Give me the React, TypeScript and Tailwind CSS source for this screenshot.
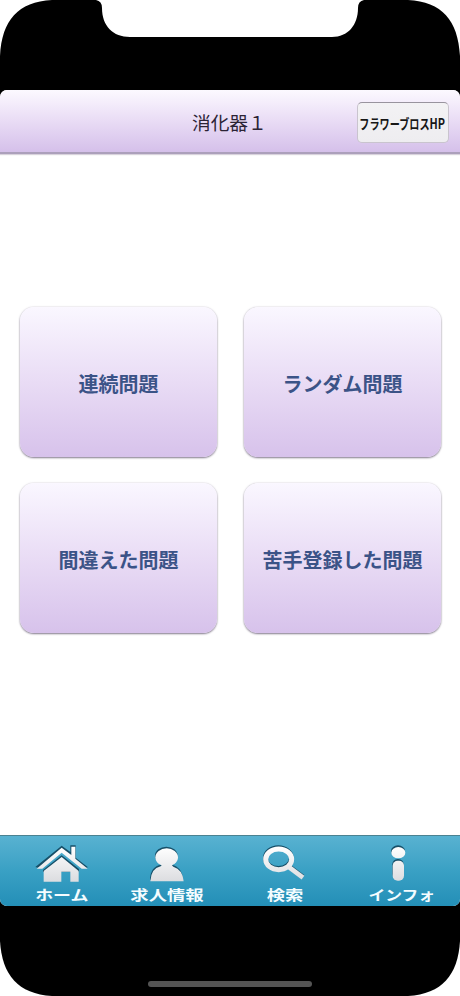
import React from "react";

const SANS = "font-['Noto_Sans_CJK_JP',sans-serif]";

function TopBezel() {
  return (
    <svg className="block h-[90px] w-full shrink-0" viewBox="0 0 460 90">
      <path
        fill="#000"
        d="M0 90V56C2 20 18 2 52 0H96Q102 1 102 8C102 26 113 37 130 37H332C348 37 358 25 358 8Q358 1 364 0H408C442 2 458 20 460 56V90Z"
      />
    </svg>
  );
}

function BottomBezel() {
  return (
    <svg className="block h-[90px] w-full shrink-0" viewBox="0 0 460 90">
      <path fill="#000" d="M0 0H460V35C458 69 442 88 408 90H52C18 88 2 69 0 35Z" />
      <rect x="148" y="75" width="164" height="6" rx="3" fill="#545454" />
    </svg>
  );
}

function QuizCard({ label }: { label: string }) {
  return (
    <button className="flex h-[150px] items-center justify-center rounded-[14px] bg-linear-to-b from-[#faf7ff] via-[#e9dcf5] to-[#d7c2eb] pt-[3px] text-[20px] leading-none font-bold text-[#3b5387] shadow-[0_1px_2px_#857d8f,0_0_2px_#a69caf60]">
      <span>{label}</span>
    </button>
  );
}

function HomeIcon() {
  return (
    <svg className="h-9 w-[54px]" viewBox="100 57 162 108" overflow="visible">
      <path fill="#174f68" d="M101 126 180 62 206 81V61H222V98L259 127 248 129 180 78 112 129ZM124 135 180 91 232 132V141H124Z" />
      <path fill="url(#metal)" d="M105 131 180 68 209 90V65H221V101L258 131H240L180 83 122 131ZM126 138 180 96 231 138V170H206V140H179V170H126Z" />
    </svg>
  );
}

function PersonIcon() {
  return (
    <svg className="h-9 w-[54px]" viewBox="420 57 162 108" overflow="visible">
      <g fill="#174f68" transform="translate(-1 -4)">
        <ellipse cx="500" cy="96" rx="34" ry="27" />
        <path d="M451 168Q452 128 485 123H514Q547 128 550 168Z" />
      </g>
      <g fill="url(#metal)">
        <ellipse cx="500" cy="97" rx="34" ry="27" />
        <path d="M451 169Q453 130 482 124Q487 122 484 117H517Q514 122 520 125Q548 133 551 169Z" />
      </g>
    </svg>
  );
}

function SearchIcon() {
  return (
    <svg className="h-9 w-[54px]" viewBox="83 57 162 108" overflow="visible">
      <g fill="none" stroke="#174f68" transform="translate(-1 -4)">
        <ellipse cx="145" cy="103" rx="39" ry="31" strokeWidth="14" />
        <path d="M173 125 219 159" strokeWidth="13" />
      </g>
      <g fill="none" stroke="url(#metal)">
        <ellipse cx="145" cy="103" rx="39" ry="31" strokeWidth="15" />
        <path d="M174 125 218 158" strokeWidth="14" />
      </g>
    </svg>
  );
}

function InfoIcon() {
  return (
    <svg className="h-9 w-[54px]" viewBox="435 57 162 108" overflow="visible">
      <g fill="#174f68" transform="translate(-1 -4)">
        <ellipse cx="505" cy="82" rx="21" ry="17" />
        <rect x="488" y="106" width="34" height="60" rx="16" />
      </g>
      <g fill="url(#metal)">
        <ellipse cx="505" cy="83" rx="21" ry="17" />
        <rect x="488" y="107" width="34" height="60" rx="15" />
      </g>
    </svg>
  );
}

function NavItem({ label, width, stretch, children }: { label: string; width: string; stretch: string; children: React.ReactNode }) {
  return (
    <button className={`flex shrink-0 flex-col items-center pt-[8px] ${width}`}>
      {children}
      <span className={`mt-[7px] inline-block text-[14px] leading-[14px] font-bold whitespace-nowrap text-[#f4fcff] ${stretch}`}>
        {label}
      </span>
    </button>
  );
}

export default function App() {
  return (
    <div className={`flex h-[996px] w-[460px] flex-col overflow-hidden bg-white ${SANS}`}>
      <svg className="absolute h-0 w-0">
        <defs>
          <linearGradient id="metal" gradientUnits="userSpaceOnUse" x1="0" y1="66" x2="0" y2="168">
            <stop offset="0" stopColor="#fff" />
            <stop offset="1" stopColor="#dcdde0" />
          </linearGradient>
        </defs>
      </svg>
      <TopBezel />
      <div className="h-[816px] bg-black">
        <div className="flex h-full flex-col overflow-hidden rounded-[7px] bg-white">
          <header className="grid h-16 shrink-0 grid-cols-[1fr_76px_1fr] items-center border-b-2 border-[#aca0bb] bg-linear-to-b from-[#fcf9ff] via-[#e9dcf5] to-[#d5c0ea] shadow-[0_1px_1px_#d8d3dc]">
            <h1 className="col-start-2 pt-[3px] text-[18.7px] leading-none whitespace-nowrap text-[#2c2335]">消化器１</h1>
            <button className="mt-[2px] mr-[11px] flex h-[41px] w-[92px] items-center justify-center justify-self-end rounded-[5px] border border-[#c9c4ce] border-t-[#99949e] bg-linear-to-b from-[#f3f2f4] to-[#eeedf0] pt-[2px] pr-[2px]">
              <span className="scale-x-[0.75] text-[13.5px] leading-none font-bold whitespace-nowrap text-[#171717]">
                フラワーブロス<span className="text-[14.5px] leading-none">HP</span>
              </span>
            </button>
          </header>
          <main className="flex flex-1 flex-col px-5 pt-[153px]">
            <div className="grid grid-cols-[197px_197px] gap-x-[27px] gap-y-[26px]">
              <QuizCard label="連続問題" />
              <QuizCard label="ランダム問題" />
              <QuizCard label="間違えた問題" />
              <QuizCard label="苦手登録した問題" />
            </div>
          </main>
          <nav className="flex h-[71px] shrink-0 border-t border-[#4b8291] bg-linear-to-b from-[#58b2d1] via-[#39a0c4] to-[#238fb7]">
            <NavItem label="ホーム" width="w-[124px]" stretch="scale-x-[1.28]"><HomeIcon /></NavItem>
            <NavItem label="求人情報" width="w-[86px]" stretch="scale-x-[1.31]"><PersonIcon /></NavItem>
            <NavItem label="検索" width="w-[149px]" stretch="scale-x-[1.31]"><SearchIcon /></NavItem>
            <NavItem label="インフォ" width="w-[85px]" stretch="scale-x-[1.2]"><InfoIcon /></NavItem>
          </nav>
        </div>
      </div>
      <BottomBezel />
    </div>
  );
}
